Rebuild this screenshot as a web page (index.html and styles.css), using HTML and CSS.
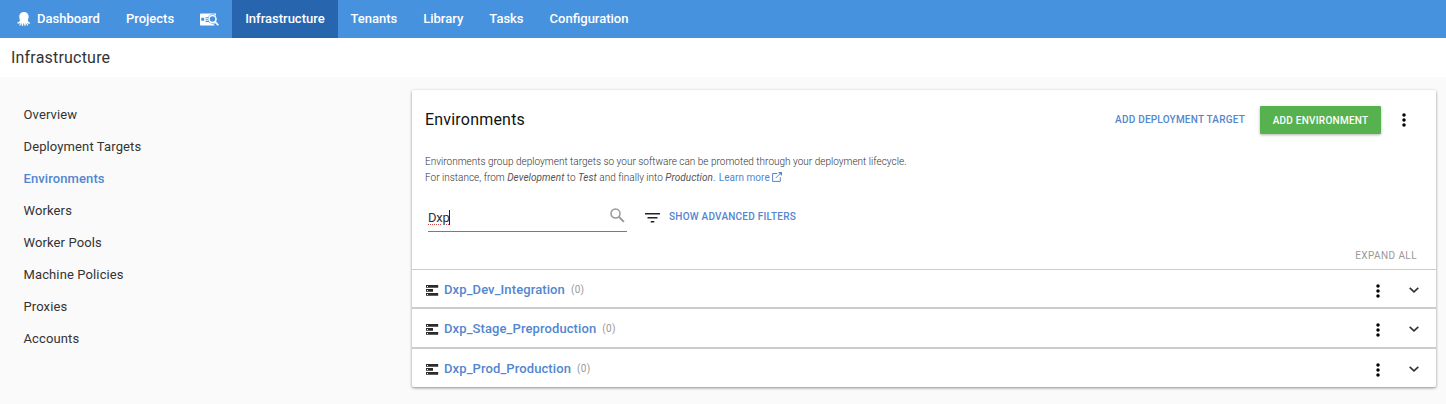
FILE: index.html
```html
<!DOCTYPE html>
<html lang="en">
<head>
<meta charset="utf-8">
<title>Infrastructure</title>
<link rel="stylesheet" href="styles.css">
</head>
<body>
<svg class="defs" width="0" height="0">
  <symbol id="dots" viewBox="0 0 4 14"><circle cx="2" cy="2" r="1.75"/><circle cx="2" cy="7" r="1.75"/><circle cx="2" cy="12" r="1.75"/></symbol>
  <symbol id="chevron" viewBox="0 0 10 6"><path d="M.7.8 5 4.900 9.300.8" fill="none" stroke="#333" stroke-width="1.600"/></symbol>
  <symbol id="env" viewBox="0 0 13 11"><path d="M0 0h12.200v2.700H0zM0 4h7v2.700H0zM0 8h12.200v2.700H0z" fill="#2b2b2b"/><path d="M1 1h1v1H1zM1 5h1v1H1zM1 9h1v1H1z" fill="#fff"/></symbol>
</svg>
<nav class="topbar">
  <a class="nav-item dashboard"><svg class="octopus" width="14" height="14" viewBox="0 0 14 14"><path d="M7 0C4.200 0 2.200 2 2.200 4.700c0 1.400.6 2.300.7 3.500.1 1-.8 1.800-2.300 2.300-.8.3-.6 1 .1 1.100 1.100.1 1.900-.2 2.500-.7-.1 1-.6 1.500-.9 2 0 .8.7.8 1.200.3.600-.6.8-1.500 1.200-2.100.3.900-.2 1.900.2 2.600.4.500 1 .3 1.200-.3.200-.7.200-1.600.6-2.300.5.800.5 1.600.8 2.300.3.700 1 .7 1.200.1.200-.8-.2-1.600 0-2.400.6.700.9 1.700 1.500 2.200.5.400 1.100.1 1-.5-.3-.6-.9-1.200-.9-1.900.7.600 1.400 1 2.400.8.700-.2.800-.9.100-1.100-1.300-.5-2-1.500-1.900-2.500.1-1.200.8-2 .8-3.400C11.700 2 9.700 0 7 0z" fill="#fff"/></svg><span>Dashboard</span></a>
  <a class="nav-item">Projects</a>
  <a class="nav-item search-link"><svg width="19" height="14" viewBox="0 0 19 14"><path d="M1 .5h15v12H1a1 1 0 0 1-1-1v-10a1 1 0 0 1 1-1z" fill="#fff"/><path d="M1.200 4.700h3v3h-3zM5.500 4.300H9v1H5.500zM5.500 6.200H8v1H5.500zM5.500 8.100H9v1H5.500z" fill="#4792df"/><circle cx="12.500" cy="6" r="4.700" fill="#4792df"/><circle cx="12.500" cy="6" r="3.500" fill="#4792df" stroke="#fff" stroke-width="1.500"/><path d="m14.600 10.500 2 2" stroke="#4792df" stroke-width="3"/><path d="m15 8.600 3.300 3.600" stroke="#fff" stroke-width="1.700"/></svg></a>
  <a class="nav-item active">Infrastructure</a>
  <a class="nav-item tenants">Tenants</a>
  <a class="nav-item">Library</a>
  <a class="nav-item">Tasks</a>
  <a class="nav-item">Configuration</a>
</nav>
<header class="page-title">Infrastructure</header>
<div class="content">
  <aside class="sidebar">
    <a>Overview</a><a>Deployment Targets</a><a class="selected">Environments</a><a>Workers</a><a>Worker Pools</a><a>Machine Policies</a><a>Proxies</a><a>Accounts</a>
  </aside>
  <main class="card">
    <div class="card-header">
      <h1>Environments</h1>
      <a class="add-target">ADD DEPLOYMENT TARGET</a>
      <button class="add-env">ADD ENVIRONMENT</button>
      <svg class="dots" width="4" height="14"><use href="#dots"/></svg>
    </div>
    <div class="intro">
      <p>Environments group deployment targets so your software can be promoted through your deployment lifecycle.</p>
      <p>For instance, from <em>Development</em> to <em>Test</em> and finally into <em>Production</em>. <a>Learn more <svg width="10" height="10" viewBox="0 0 10 10" fill="none" stroke="#5386cf"><path d="M5.300 1.500H.6v7.900h7.700V5.200M3.600 6.200 8.900.9"/><path d="M6 0h4v4z" fill="#5386cf" stroke="none"/></svg></a></p>
    </div>
    <div class="filters">
      <div class="search"><span class="query">Dxp</span><span class="caret"></span><svg width="15" height="15" viewBox="0 0 15 15" fill="none" stroke="#999"><circle cx="5.500" cy="5.500" r="4.500" stroke-width="1.500"/><path d="m8.900 8.900 5 5" stroke-width="2"/></svg></div>
      <svg class="filter-icon" width="15" height="10" viewBox="0 0 15 10"><path d="M0 0h15v1.600H0zM2.500 4h10v1.600h-10zM5.700 8h3.600v1.600H5.700z" fill="#222"/></svg>
      <a class="advanced">SHOW ADVANCED FILTERS</a>
    </div>
    <div class="expand"><span>EXPAND ALL</span></div>
    <div class="row first"><svg class="env" width="13" height="11"><use href="#env"/></svg><a class="name">Dxp_Dev_Integration</a><span class="count">(0)</span><svg class="dots" width="4" height="14"><use href="#dots"/></svg><svg class="chevron" width="10" height="6"><use href="#chevron"/></svg></div>
    <div class="row"><svg class="env" width="13" height="11"><use href="#env"/></svg><a class="name">Dxp_Stage_Preproduction</a><span class="count">(0)</span><svg class="dots" width="4" height="14"><use href="#dots"/></svg><svg class="chevron" width="10" height="6"><use href="#chevron"/></svg></div>
    <div class="row"><svg class="env" width="13" height="11"><use href="#env"/></svg><a class="name">Dxp_Prod_Production</a><span class="count">(0)</span><svg class="dots" width="4" height="14"><use href="#dots"/></svg><svg class="chevron" width="10" height="6"><use href="#chevron"/></svg></div>
  </main>
</div>
</body>
</html>
```
FILE: styles.css
```css
* { box-sizing: border-box; }
body { margin: 0; height: 404px; overflow: hidden; background: #fafafa; color: #333; font: 13px Roboto, sans-serif; }
.defs { display: block; width: 0; height: 0; }
svg { flex: none; }
.topbar { display: flex; height: 38px; background: #4792df; color: #fff; font-weight: 500; }
.nav-item { display: flex; align-items: center; padding: 0 13px 2px; white-space: nowrap; }
.dashboard { width: 113px; padding-left: 17px; gap: 6px; }
.octopus { margin-top: 2px; }
.search-link { padding: 2px 13px 0; }
.active { background: #2765af; width: 106px; }
.tenants { padding-left: 12.3px; }
.page-title { display: flex; align-items: center; height: 39px; padding-left: 11px; background: #fff; font-size: 16px; letter-spacing: .2px; }
.content { display: flex; }
.sidebar { width: 412px; padding: 21px 23.5px; }
.sidebar a { display: flex; align-items: center; height: 32px; letter-spacing: .12px; }
.sidebar .selected { color: #5386cf; font-weight: 500; letter-spacing: .1px; }
.card { width: 1024px; height: 297px; margin-top: 13px; background: #fff; border-radius: 2px; box-shadow: 0 1px 3px rgba(0,0,0,.45); }
.card-header { display: flex; align-items: center; height: 60px; padding-left: 13px; }
h1 { margin: -2px auto 0 0; color: #111; font-size: 16px; font-weight: 400; letter-spacing: .2px; }
.add-target { color: #5386cf; font-size: 10px; font-weight: 500; letter-spacing: .22px; margin: -1px 15px 0 0; }
.add-env { width: 121px; height: 28px; padding: 1px 0 0; border: 0; border-radius: 1px; background: #57b14f; color: #fff; font: 500 10px Roboto, sans-serif; letter-spacing: .25px; box-shadow: 0 1px 3px rgba(0,0,0,.3); }
.card-header .dots { margin: -1px 30.5px 0 20.5px; }
.intro { padding: 4px 13px 0; height: 50px; font-size: 10px; font-weight: 300; letter-spacing: .01px; color: #333; }
.intro p { margin: 0; height: 16px; line-height: 16px; white-space: nowrap; }
.intro em { font-weight: 400; color: #555; letter-spacing: .04px; }
.intro a { color: #5386cf; font-weight: 400; letter-spacing: .04px; margin-left: 1px; }
.intro svg { vertical-align: -1px; }
.filters { display: flex; height: 48px; padding-left: 16px; }
.search { display: flex; align-items: center; width: 199px; height: 32px; border-bottom: 1px solid #438bb5; padding: 4px 2px 0 0; }
.query { letter-spacing: -.3px; text-decoration: underline dotted #d34a4a 1px; text-underline-offset: 2px; }
.caret { width: 1px; height: 15px; background: #222; }
.search svg { margin: 0 0 5px auto; }
.filter-icon { margin: 13px 9px 0 18px; }
.advanced { padding-top: 11px; color: #5386cf; font-size: 10px; font-weight: 500; letter-spacing: .24px; }
.expand { height: 21px; padding: 2px 19px 0 0; text-align: right; color: #999; font-size: 10px; letter-spacing: .42px; }
.row { display: flex; align-items: center; height: 40px; padding: 1px 18px 0 14px; border-top: 2px solid #ccc; }
.first { height: 38px; padding-top: 2px; border-top-width: 1px; }
.env { margin: 2px 5px 0 0; }
.name { color: #5386cf; font-weight: 500; letter-spacing: .1px; }
.count { margin-left: 6px; color: #999; font-size: 10px; letter-spacing: .3px; }
.row .dots { margin: 2px 28.5px 0 auto; }
.chevron { margin-right: -.5px; }
```
